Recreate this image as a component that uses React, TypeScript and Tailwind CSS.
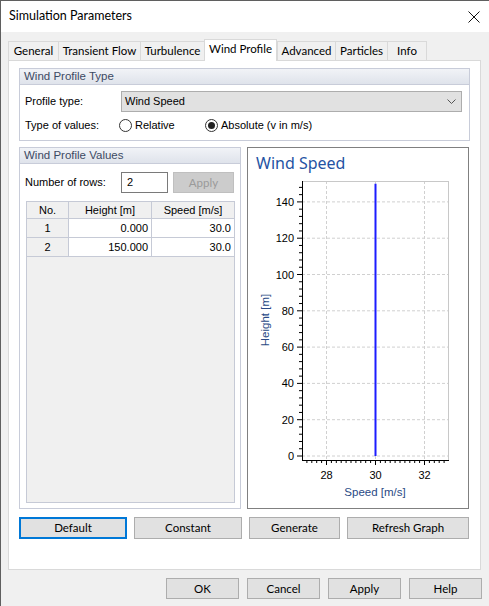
import React from "react";

const ui = { fontFamily: 'Lato, "Noto Sans", sans-serif' };
const ms = { fontFamily: '"Liberation Sans", Arial, sans-serif' };

const tabs = [
  { label: "General", w: "w-[50px]" },
  { label: "Transient Flow", w: "w-[82px]" },
  { label: "Turbulence", w: "w-[64px]" },
  { label: "Wind Profile", w: "w-[73px]", active: true },
  { label: "Advanced", w: "w-[58px]" },
  { label: "Particles", w: "w-[52px]" },
  { label: "Info", w: "w-[40px]" },
];

function GroupHeader({ title }: { title: string }) {
  return (
    <div className="h-[16px] flex items-center px-[4px] bg-gradient-to-b from-[#f1f3f7] to-[#dfe3eb] border-b border-[#c8ccd9] text-[11.5px] text-[#3d4a63] whitespace-nowrap">
      {title}
    </div>
  );
}

function Radio({ checked, label }: { checked?: boolean; label: string }) {
  return (
    <div className="flex items-center gap-[3px] whitespace-nowrap">
      <span className="w-[13px] h-[13px] rounded-full border border-[#333] bg-white flex items-center justify-center">
        {checked && <span className="w-[7px] h-[7px] rounded-full bg-[#222]" />}
      </span>
      <span>{label}</span>
    </div>
  );
}

function Btn({ label, w, h, focus }: { label: string; w: string; h: string; focus?: boolean }) {
  return (
    <div
      className={`${w} ${h} flex items-center justify-center bg-[#e1e1e1] text-[11.5px] text-black whitespace-nowrap ${
        focus ? "border-2 border-[#0078d7]" : "border border-[#adadad]"
      }`}
      style={ui}
    >
      {label}
    </div>
  );
}

const rows = [
  { no: "1", h: "0.000", s: "30.0" },
  { no: "2", h: "150.000", s: "30.0" },
];

function Chart() {
  const Y = (v: number) => 308 - v * 1.815;
  const X = (s: number) => 54 + (s - 27) * 24.5;
  const majorsY = [0, 20, 40, 60, 80, 100, 120, 140];
  const minorsY: number[] = [];
  for (let v = 0; v <= 150; v += 4) if (v % 20 !== 0) minorsY.push(v);
  const majorsX = [28, 30, 32];
  const minorsX: number[] = [];
  for (let i = 136; i <= 164; i++) {
    if (i % 10 !== 0) minorsX.push(i / 5);
  }
  return (
    <svg width="220" height="360" className="block">
      <text x="8" y="21" fontSize="16" fill="#2553a3" fontFamily='"Noto Sans", sans-serif'>
        Wind Speed
      </text>
      {/* grid */}
      {majorsY.map((v) => (
        <line key={"gy" + v} x1={54} x2={200} y1={Y(v)} y2={Y(v)} stroke="#d0d0d0" strokeDasharray="3 2" />
      ))}
      {majorsX.map((s) => (
        <line key={"gx" + s} x1={X(s)} x2={X(s)} y1={33} y2={312} stroke="#d0d0d0" strokeDasharray="3 2" />
      ))}
      <line x1={54} x2={200.5} y1={33.5} y2={33.5} stroke="#c8c8c8" />
      <line x1={200.5} x2={200.5} y1={33} y2={312} stroke="#c8c8c8" />
      {/* axes */}
      <line x1={54.5} x2={54.5} y1={33} y2={312.5} stroke="#000" />
      <line x1={54} x2={201} y1={312.5} y2={312.5} stroke="#000" />
      {majorsY.map((v) => (
        <line key={"ty" + v} x1={49} x2={54} y1={Y(v)} y2={Y(v)} stroke="#000" />
      ))}
      {minorsY.map((v) => (
        <line key={"my" + v} x1={51} x2={54} y1={Y(v)} y2={Y(v)} stroke="#000" />
      ))}
      {majorsX.map((s) => (
        <line key={"tx" + s} x1={X(s)} x2={X(s)} y1={312} y2={317} stroke="#000" />
      ))}
      {minorsX.map((s) => (
        <line key={"mx" + s} x1={X(s)} x2={X(s)} y1={312} y2={315} stroke="#000" />
      ))}
      {/* labels */}
      {majorsY.map((v) => (
        <text key={"ly" + v} x={46} y={Y(v) + 4} fontSize="11" textAnchor="end" fill="#000" fontFamily='"Liberation Sans", sans-serif'>
          {v}
        </text>
      ))}
      {majorsX.map((s) => (
        <text key={"lx" + s} x={X(s)} y={331} fontSize="11" textAnchor="middle" fill="#000" fontFamily='"Liberation Sans", sans-serif'>
          {s}
        </text>
      ))}
      <text x={127} y={348} fontSize="11.5" textAnchor="middle" fill="#2a4a85" fontFamily='"Liberation Sans", sans-serif'>
        Speed [m/s]
      </text>
      <text
        x={0}
        y={0}
        fontSize="11.5"
        textAnchor="middle"
        fill="#2a4a85"
        fontFamily='"Liberation Sans", sans-serif'
        transform="translate(21 172) rotate(-90)"
      >
        Height [m]
      </text>
      {/* data */}
      <line x1={X(30)} x2={X(30)} y1={Y(150)} y2={Y(0)} stroke="#1c1cff" strokeWidth="2" />
    </svg>
  );
}

export default function App() {
  return (
    <div className="w-[489px] h-[606px] bg-[#f0f0f0] border-l border-t border-[#5f5f5f] overflow-hidden text-black" style={ui}>
      {/* title bar */}
      <div className="h-[31px] bg-white flex items-center justify-between pl-[8px] pr-[9px]">
        <span className="text-[12.5px]">Simulation Parameters</span>
        <svg width="12" height="12" viewBox="0 0 12 12">
          <path d="M0.5 0.5 L11.5 11.5 M11.5 0.5 L0.5 11.5" stroke="#111" strokeWidth="1" />
        </svg>
      </div>

      <div className="pl-[7px] pt-[6px]">
        {/* tabs */}
        <div className="flex items-end h-[22px]">
          {tabs.map((t) =>
            t.active ? (
              <div
                key={t.label}
                className={`${t.w} h-[22px] -mb-px relative z-10 bg-white border border-b-0 border-[#d9d9d9] flex items-center justify-center text-[11.5px] pb-[3px] whitespace-nowrap`}
              >
                {t.label}
              </div>
            ) : (
              <div
                key={t.label}
                className={`${t.w} h-[19px] bg-[#f0f0f0] border border-b-0 border-r-0 border-[#d9d9d9] last:border-r flex items-center justify-center text-[11.5px] whitespace-nowrap`}
              >
                {t.label}
              </div>
            )
          )}
        </div>

        {/* panel */}
        <div className="w-[473px] h-[510px] bg-white border border-[#d9d9d9] pl-[10px] pt-[7px]" style={ms}>
          {/* Wind Profile Type */}
          <div className="w-[451px] h-[73px] border border-[#c8ccd9] text-[11px]">
            <GroupHeader title="Wind Profile Type" />
            <div className="flex items-center mt-[6px] pl-[5px]">
              <span className="w-[96px]">Profile type:</span>
              <div className="w-[341px] h-[21px] bg-[#e1e1e1] border border-[#adadad] flex items-center justify-between pl-[3px] pr-[5px]">
                <span>Wind Speed</span>
                <svg width="9" height="6" viewBox="0 0 9 6">
                  <path d="M0.5 0.5 L4.5 4.5 L8.5 0.5" fill="none" stroke="#555" strokeWidth="1" />
                </svg>
              </div>
            </div>
            <div className="flex items-center mt-[5px] pl-[5px]">
              <span className="w-[94px]">Type of values:</span>
              <div className="w-[86px]">
                <Radio label="Relative" />
              </div>
              <Radio checked label="Absolute (v in m/s)" />
            </div>
          </div>

          <div className="flex gap-[6px] mt-[6px]">
            {/* Wind Profile Values */}
            <div className="w-[222px] h-[362px] border border-[#c8ccd9] text-[11px] flex flex-col">
              <GroupHeader title="Wind Profile Values" />
              <div className="flex items-center mt-[8px] pl-[5px]">
                <span className="w-[96px]">Number of rows:</span>
                <div className="w-[47px] h-[21px] border border-[#7a7a7a] bg-white flex items-center pl-[5px]">2</div>
                <div className="w-[61px] h-[21px] ml-[5px] bg-[#cccccc] border border-[#bfbfbf] flex items-center justify-center text-[11.5px] text-[#9a9a9a]" style={ui}>
                  Apply
                </div>
              </div>
              <div className="w-[209px] h-[302px] ml-[6px] mt-[8px] border border-[#c6cad6] bg-[#f0f0f0]">
                <div className="flex h-[17px] border-b border-[#c6cad6]">
                  <div className="w-[42px] border-r border-[#c6cad6] flex items-center justify-center">No.</div>
                  <div className="w-[83px] border-r border-[#c6cad6] flex items-center justify-center">Height [m]</div>
                  <div className="w-[82px] flex items-center justify-center">Speed [m/s]</div>
                </div>
                {rows.map((r) => (
                  <div key={r.no} className="flex h-[19px] border-b border-[#c6cad6]">
                    <div className="w-[42px] border-r border-[#c6cad6] flex items-center justify-center">{r.no}</div>
                    <div className="w-[83px] border-r border-[#c6cad6] bg-white flex items-center justify-end pr-[3px]">{r.h}</div>
                    <div className="w-[82px] bg-white flex items-center justify-end pr-[3px]">{r.s}</div>
                  </div>
                ))}
              </div>
            </div>

            {/* Chart */}
            <div className="w-[222px] h-[362px] border border-[#808080] bg-white">
              <Chart />
            </div>
          </div>

          <div className="flex gap-[7px] mt-[8px]">
            <Btn label="Default" w="w-[108px]" h="h-[22px]" focus />
            <Btn label="Constant" w="w-[108px]" h="h-[22px]" />
            <Btn label="Generate" w="w-[91px]" h="h-[22px]" />
            <Btn label="Refresh Graph" w="w-[122px]" h="h-[22px]" />
          </div>
        </div>

        {/* dialog buttons */}
        <div className="flex gap-[8px] mt-[8px] pl-[158px]">
          <Btn label="OK" w="w-[73px]" h="h-[21px]" />
          <Btn label="Cancel" w="w-[73px]" h="h-[21px]" />
          <Btn label="Apply" w="w-[73px]" h="h-[21px]" />
          <Btn label="Help" w="w-[73px]" h="h-[21px]" />
        </div>
      </div>
    </div>
  );
}
